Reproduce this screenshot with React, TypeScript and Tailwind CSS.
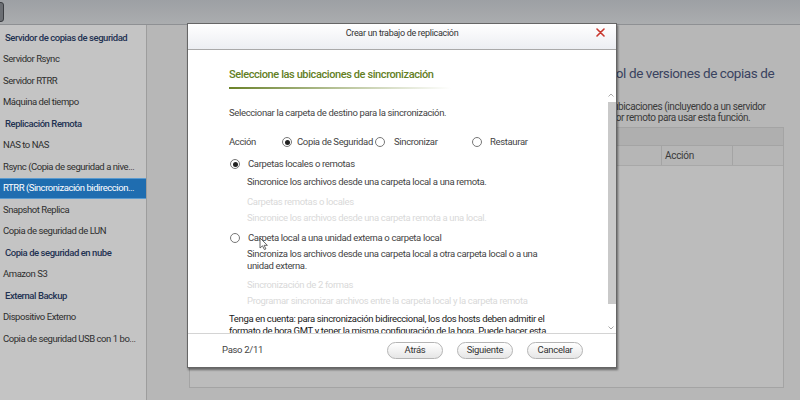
import React from "react";

const menu: { label: string; kind: "head" | "item" | "active" }[] = [
  { label: "Servidor de copias de seguridad", kind: "head" },
  { label: "Servidor Rsync", kind: "item" },
  { label: "Servidor RTRR", kind: "item" },
  { label: "Máquina del tiempo", kind: "item" },
  { label: "Replicación Remota", kind: "head" },
  { label: "NAS to NAS", kind: "item" },
  { label: "Rsync (Copia de seguridad a nive...", kind: "item" },
  { label: "RTRR (Sincronización bidireccion...", kind: "active" },
  { label: "Snapshot Replica", kind: "item" },
  { label: "Copia de seguridad de LUN", kind: "item" },
  { label: "Copia de seguridad en nube", kind: "head" },
  { label: "Amazon S3", kind: "item" },
  { label: "External Backup", kind: "head" },
  { label: "Dispositivo Externo", kind: "item" },
  { label: "Copia de seguridad USB con 1 bo...", kind: "item" },
];

function Radio({ checked }: { checked?: boolean }) {
  return (
    <span className="flex h-[10px] w-[10px] shrink-0 items-center justify-center rounded-full border border-[#777] bg-white">
      {checked && <span className="h-[5px] w-[5px] rounded-full bg-[#222]" />}
    </span>
  );
}

function Button({ children }: { children: React.ReactNode }) {
  return (
    <button className="flex h-[17px] w-[56px] items-center justify-center rounded-full border border-[#b4b4b4] bg-gradient-to-b from-white to-[#e6e6e6] text-[9.5px] tracking-[-0.3px] text-[#333]">
      {children}
    </button>
  );
}

function Sidebar() {
  return (
    <aside className="w-[147px] shrink-0 border-r border-[#9d9d9d] bg-[#c4c4c4] pt-[2px]">
      {menu.map((m) =>
        m.kind === "active" ? (
          <div
            key={m.label}
            className="flex h-[21.5px] items-center whitespace-nowrap border-y border-[#5b9bd0] bg-[#1f6db0] pl-[3px] text-[9.5px] tracking-[-0.45px] text-white"
          >
            {m.label}
          </div>
        ) : (
          <div
            key={m.label}
            className={
              m.kind === "head"
                ? "flex h-[21.5px] items-center whitespace-nowrap pl-[5px] text-[9.5px] font-medium tracking-[-0.45px] text-[#1f3252]"
                : "flex h-[21.5px] items-center whitespace-nowrap pl-[3px] text-[9.5px] tracking-[-0.45px] text-[#2e2e2e]"
            }
          >
            {m.label}
          </div>
        )
      )}
    </aside>
  );
}

function Backdrop() {
  return (
    <main className="flex min-w-0 flex-1 flex-col overflow-hidden pl-[42px] pr-[16px]">
      <h1 className="mt-[38px] h-[20px] whitespace-nowrap pl-[396px] text-[13.5px] leading-[20px] tracking-[-0.4px] text-[#3a4360]">
        Control de versiones de copias de
      </h1>
      <div className="mt-[18px] whitespace-nowrap text-[10px] leading-[11px] tracking-[-0.4px] text-[#3a3a3a]">
        <div className="pl-[424px]">ubicaciones (incluyendo a un servidor</div>
        <div className="pl-[407px]">ervidor remoto para usar esta función.</div>
      </div>
      <div className="mt-[4px] flex h-[261px] flex-col border border-[#a4a4a4] bg-[#bcbcbc]">
        <div className="h-[18px] border-b border-[#a4a4a4] bg-[#afafaf]" />
        <div className="flex h-[20px] border-b border-[#a8a8a8] bg-[#b6b6b6] text-[10px] tracking-[-0.3px] text-[#3a3a3a]">
          <div className="w-[472px] border-r border-[#a4a4a4]" />
          <div className="flex w-[71px] items-center border-r border-[#a4a4a4] pl-[3px]">Acción</div>
          <div className="flex-1" />
        </div>
        <div className="flex-1" />
      </div>
    </main>
  );
}

function Modal() {
  return (
    <div className="absolute left-[187px] top-[23px] flex h-[345px] w-[430px] flex-col border border-[#666] bg-white shadow-[1px_2px_2px_rgba(0,0,0,0.45)]">
      <div className="relative flex h-[26px] shrink-0 justify-center border-b border-[#a9a9a9] bg-gradient-to-b from-white to-[#eceef2] pt-[3px] text-[9px] leading-[12px] tracking-[-0.3px] text-[#333]">
        Crear un trabajo de replicación
        <svg className="absolute right-[11px] top-[4px]" width="9" height="9" viewBox="0 0 9 9">
          <path d="M1 1 L8 8 M8 1 L1 8" stroke="#c8372d" strokeWidth="1.6" strokeLinecap="round" />
        </svg>
      </div>

      <div className="flex h-[283px] shrink-0">
        <div className="min-w-0 flex-1 overflow-hidden whitespace-nowrap pl-[41px] pr-[10px] text-[9.5px] leading-[12px] tracking-[-0.35px] text-[#444]">
          <div className="mt-[18px] text-[11px] font-medium leading-[14px] tracking-[-0.4px] text-[#64801f]">
            Seleccione las ubicaciones de sincronización
          </div>
          <div className="mt-[5px] h-[2px] w-[222px] bg-gradient-to-r from-[#6b8226] via-[#b9c49a] to-transparent" />
          <div className="mt-[18px]">Seleccionar la carpeta de destino para la sincronización.</div>

          <div className="mt-[17px] flex h-[12px] items-center">
            <span className="w-[53px]">Acción</span>
            <Radio checked />
            <span className="ml-[5px] w-[78px]">Copia de Seguridad</span>
            <Radio />
            <span className="ml-[9px] w-[78px]">Sincronizar</span>
            <Radio />
            <span className="ml-[8px]">Restaurar</span>
          </div>

          <div className="mt-[10px] flex h-[12px] items-center gap-[8px] pl-[1px]">
            <Radio checked />
            <span>Carpetas locales o remotas</span>
          </div>
          <div className="ml-[18px] mt-[6px]">Sincronice los archivos desde una carpeta local a una remota.</div>
          <div className="ml-[18px] mt-[8px] text-[#d9d9d9]">Carpetas remotas o locales</div>
          <div className="ml-[18px] mt-[4px] text-[#d9d9d9]">Sincronice los archivos desde una carpeta remota a una local.</div>

          <div className="mt-[8px] flex h-[12px] items-center gap-[8px] pl-[1px]">
            <Radio />
            <span>Carpeta local a una unidad externa o carpeta local</span>
          </div>
          <div className="ml-[18px] mt-[4px]">
            <div>Sincroniza los archivos desde una carpeta local a otra carpeta local o a una</div>
            <div>unidad externa.</div>
          </div>
          <div className="ml-[18px] mt-[7px] text-[#d9d9d9]">Sincronización de 2 formas</div>
          <div className="ml-[18px] mt-[4px] text-[#d9d9d9]">
            Programar sincronizar archivos entre la carpeta local y la carpeta remota
          </div>

          <div className="mt-[6px] text-[#222]">
            <div>Tenga en cuenta: para sincronización bidireccional, los dos hosts deben admitir el</div>
            <div>formato de hora GMT y tener la misma configuración de la hora. Puede hacer esta</div>
          </div>
        </div>

        <div className="flex w-[10px] shrink-0 flex-col items-center">
          <svg className="mt-[43px]" width="6" height="4" viewBox="0 0 6 4">
            <path d="M0.5 3.5 L3 1 L5.5 3.5" stroke="#aaa" strokeWidth="1" fill="none" />
          </svg>
          <div className="ml-[1px] mt-[5px] h-[202px] w-[8px] bg-[#c9c9c9]" />
          <div className="flex-1" />
          <svg className="mb-[3px]" width="6" height="4" viewBox="0 0 6 4">
            <path d="M0.5 0.5 L3 3 L5.5 0.5" stroke="#aaa" strokeWidth="1" fill="none" />
          </svg>
        </div>
      </div>

      <div className="flex flex-1 items-center border-t border-[#d4d4d4] pl-[34px] pr-[33px] text-[9.5px] tracking-[-0.3px] text-[#444]">
        <span>Paso 2/11</span>
        <div className="ml-auto flex gap-[14px]">
          <Button>Atrás</Button>
          <Button>Siguiente</Button>
          <Button>Cancelar</Button>
        </div>
      </div>
    </div>
  );
}

export default function App() {
  return (
    <div className="relative h-[400px] w-[800px] overflow-hidden bg-[#b7b7b7] font-['Roboto',sans-serif]">
      <header className="relative h-[25px] border-b border-[#8e9093] bg-gradient-to-b from-[#9da0a4] to-[#abadaf]">
        <div className="absolute left-[-6px] top-[2px] h-[20px] w-[10px] rounded-[3px] border border-[#3c3e42] bg-[#6b6e73]" />
      </header>
      <div className="flex h-[375px]">
        <Sidebar />
        <Backdrop />
      </div>
      <Modal />
      {/* mouse pointer */}
      <svg className="absolute left-[259px] top-[237px]" width="10" height="14" viewBox="0 0 10 14">
        <path d="M1 1 L1 11 L3.5 8.8 L5.4 12.6 L6.9 11.9 L5.1 8.3 L8.4 8.3 Z" fill="#fff" stroke="#555" strokeWidth="0.9" strokeLinejoin="round" />
      </svg>
    </div>
  );
}
